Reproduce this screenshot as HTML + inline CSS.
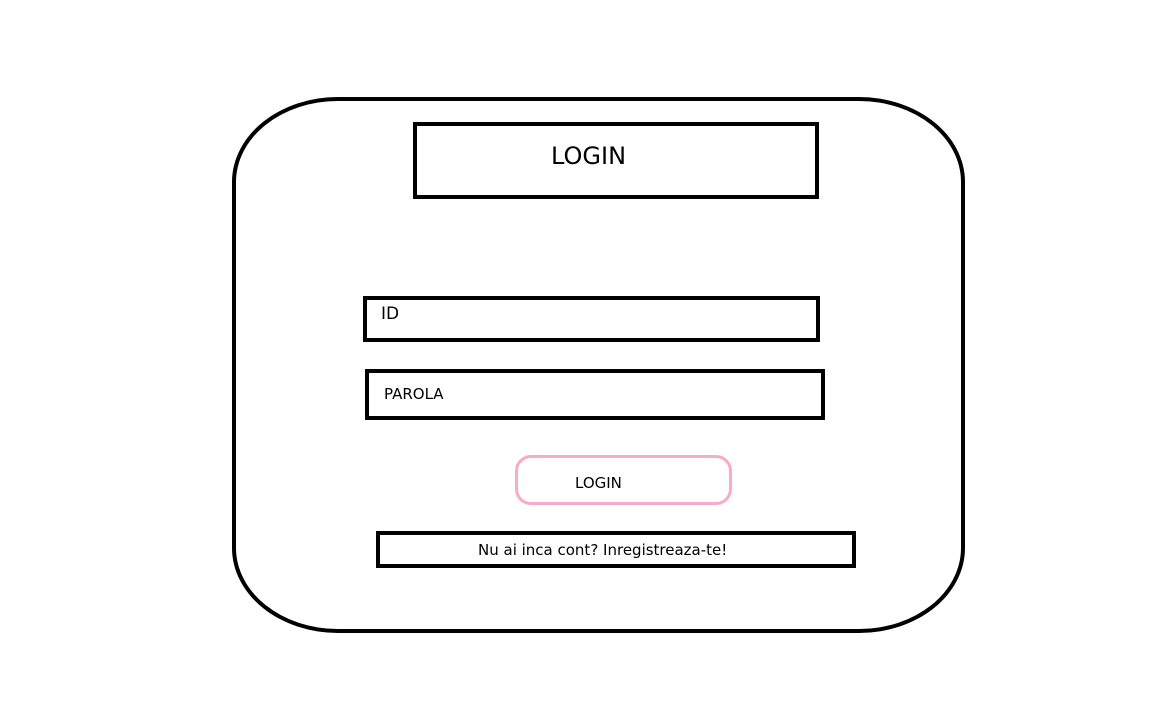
<!DOCTYPE html>
<html><head><meta charset="utf-8"><style>
body{margin:0;width:1152px;height:720px;background:#fff;position:relative;overflow:hidden;font-family:"DejaVu Sans","Liberation Sans",sans-serif;color:#000}
.b{position:absolute;box-sizing:border-box;border:4px solid #000}
.t{position:absolute;white-space:nowrap}
</style></head><body>
<div class="b" style="left:232px;top:97px;width:733px;height:536px;border-radius:106px/85px"></div>
<div class="b" style="left:413px;top:122px;width:406px;height:77px"></div>
<div class="t" style="left:551px;top:142px;font-size:24px">LOGIN</div>
<div class="b" style="left:363px;top:296px;width:457px;height:46px"></div>
<div class="t" style="left:381px;top:304px;font-size:17px">ID</div>
<div class="b" style="left:365px;top:369px;width:460px;height:51px"></div>
<div class="t" style="left:384px;top:385px;font-size:15px">PAROLA</div>
<div class="b" style="left:515px;top:455px;width:217px;height:50px;border:3px solid #f9aac8;border-radius:16px"></div>
<div class="t" style="left:575px;top:474px;font-size:15px">LOGIN</div>
<div class="b" style="left:376px;top:531px;width:480px;height:37px"></div>
<div class="t" style="left:478px;top:541px;font-size:15px">Nu ai inca cont? Inregistreaza-te!</div>
</body></html>
